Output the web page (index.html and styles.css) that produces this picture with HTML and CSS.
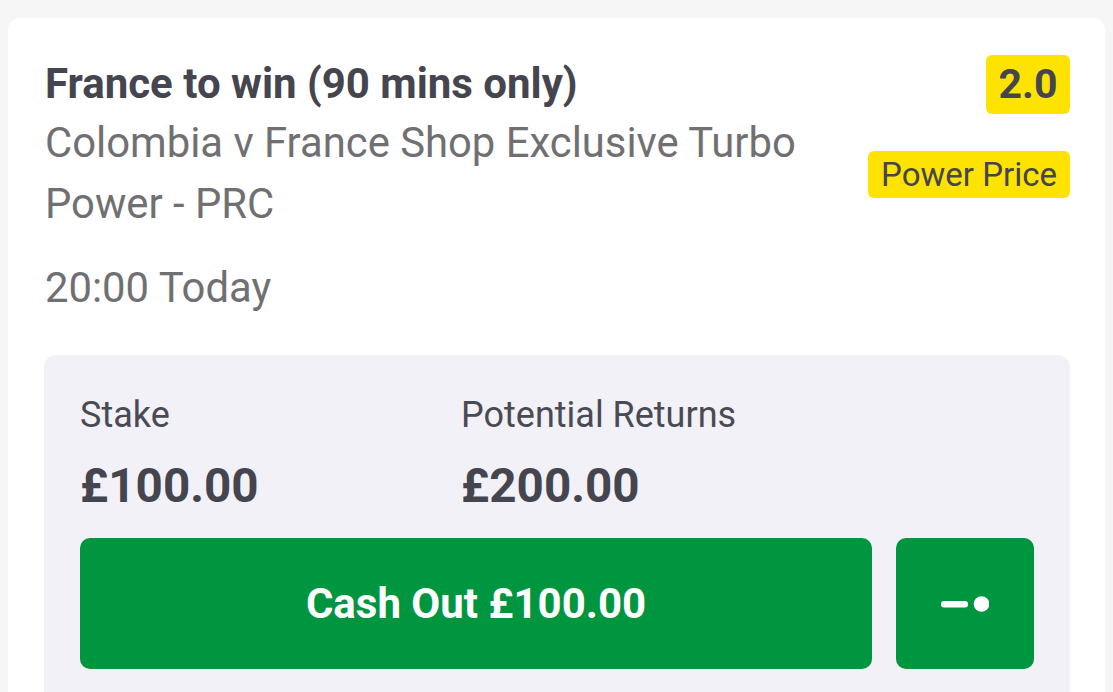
FILE: index.html
```html
<!DOCTYPE html>
<html>
<head>
<meta charset="utf-8">
<link rel="stylesheet" href="styles.css">
</head>
<body>
<div class="card">
  <div class="header">
    <div class="info">
      <div class="title">France to win (90 mins only)</div>
      <div class="subtitle">Colombia v France Shop Exclusive Turbo Power - PRC</div>
      <div class="time">20:00 Today</div>
    </div>
    <div class="badges">
      <div class="odds">2.0</div>
      <div class="power">Power Price</div>
    </div>
  </div>
  <div class="panel">
    <div class="figures">
      <div class="fig fig-stake">
        <div class="label">Stake</div>
        <div class="value">£100.00</div>
      </div>
      <div class="fig">
        <div class="label">Potential Returns</div>
        <div class="value">£200.00</div>
      </div>
    </div>
    <div class="actions">
      <button class="cashout">Cash Out £100.00</button>
      <button class="slider" aria-label="Partial cash out">
        <svg width="48" height="16" viewBox="0 0 48 16">
          <rect x="0" y="5" width="27" height="6.5" rx="3" fill="#fff"/>
          <circle cx="40.5" cy="8" r="7.8" fill="#fff"/>
        </svg>
      </button>
    </div>
  </div>
</div>
</body>
</html>
```
FILE: styles.css
```css
html, body {
  margin: 0;
  padding: 0;
  background: #f6f6f6;
  font-family: Roboto, "Liberation Sans", sans-serif;
  height: 692px;
  overflow: hidden;
}

.card {
  margin: 18px 0 0 8px;
  width: 1097px;
  box-sizing: border-box;
  background: #ffffff;
  border-radius: 12px;
  padding: 37px 35px 40px 37px;
}

.header {
  display: flex;
  justify-content: space-between;
  align-items: flex-start;
}

.info {
  width: 800px;
}

.title {
  font-size: 42px;
  font-weight: 700;
  line-height: 57px;
  color: #45454f;
}

.subtitle {
  font-size: 41.8px;
  line-height: 61px;
  color: #707072;
}

.time {
  margin-top: 23px;
  font-size: 41.8px;
  line-height: 61px;
  color: #707072;
}

.badges {
  display: flex;
  flex-direction: column;
  align-items: flex-end;
  gap: 37px;
}

.odds {
  background: #ffe300;
  border-radius: 6px;
  height: 59px;
  padding: 0 12.5px;
  font-size: 41px;
  font-weight: 700;
  line-height: 59px;
  color: #45454f;
}

.power {
  background: #ffe300;
  border-radius: 6px;
  height: 47px;
  padding: 0 13px;
  font-size: 33px;
  line-height: 47px;
  color: #45454f;
}

.panel {
  margin-top: 37px;
  margin-left: -1px;
  background: #f1f1f7;
  border-radius: 12px;
  padding: 38px 35px 40px 36px;
}

.figures {
  display: flex;
}

.fig-stake {
  width: 381px;
}

.label {
  font-size: 36px;
  line-height: 44px;
  color: #4a4a55;
}

.value {
  margin-top: 19px;
  font-size: 47.6px;
  font-weight: 700;
  line-height: 60px;
  color: #45454f;
}

.actions {
  margin-top: 22px;
  display: flex;
  gap: 24px;
}

button {
  border: none;
  background: #009640;
  color: #ffffff;
  border-radius: 10px;
  height: 131px;
  font-family: Roboto, "Liberation Sans", sans-serif;
  cursor: pointer;
}

.cashout {
  width: 792px;
  font-size: 42px;
  font-weight: 700;
}

.slider {
  width: 138px;
  display: flex;
  align-items: center;
  justify-content: center;
  padding: 0;
}

.slider svg {
  display: block;
}
```
